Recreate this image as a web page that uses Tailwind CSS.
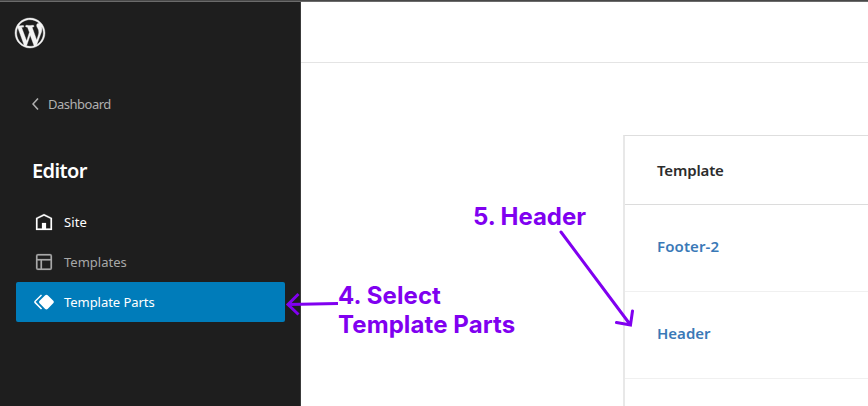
<!DOCTYPE html>
<html lang="en">
<head>
<meta charset="utf-8">
<title>Editor</title>
<script src="https://cdn.jsdelivr.net/npm/@tailwindcss/browser@4"></script>
</head>
<body class="relative h-[406px] w-[868px] overflow-hidden bg-white font-['Noto_Sans',sans-serif]">
<div class="flex h-[406px] flex-col">
  <div class="h-[2px] shrink-0 border-b border-[#6b6b6b] bg-[#484848]"></div>
  <div class="flex min-h-0 flex-1">
    <aside class="flex w-[301px] shrink-0 flex-col border-r border-[#3a3a3a] bg-[#1e1e1e]">
      <div class="pt-[13px] pl-3">
        <svg class="size-9" viewBox="-2 -2 24 24" fill="#f4f4f4" stroke="#f4f4f4" stroke-width=".25"><path d="M20 10c0-5.51-4.49-10-10-10C4.48 0 0 4.49 0 10c0 5.52 4.48 10 10 10 5.51 0 10-4.48 10-10zM7.78 15.37L4.37 6.22c.55-.02 1.17-.08 1.17-.08.5-.06.44-1.13-.06-1.11 0 0-1.45.11-2.37.11-.18 0-.37 0-.58-.01C4.12 2.69 6.87 1.11 10 1.11c2.33 0 4.45.87 6.05 2.34-.68-.11-1.65.39-1.65 1.58 0 .74.45 1.36.9 2.1.35.61.55 1.36.55 2.46 0 1.49-1.4 5-1.4 5l-3.03-8.37c.54-.02.82-.17.82-.17.5-.05.44-1.25-.06-1.22 0 0-1.44.12-2.38.12-.87 0-2.33-.12-2.33-.12-.5-.03-.56 1.2-.06 1.22l.92.08 1.26 3.41zM17.41 10c.24-.64.74-1.87.43-4.25.7 1.29 1.05 2.71 1.05 4.25 0 3.29-1.73 6.24-4.4 7.78.97-2.59 1.94-5.2 2.92-7.78zM6.1 18.09C3.12 16.65 1.11 13.53 1.11 10c0-1.3.23-2.48.72-3.59C3.25 10.3 4.67 14.2 6.1 18.09zm4.03-6.63l2.58 6.98c-.86.29-1.76.45-2.71.45-.79 0-1.57-.11-2.29-.33.81-2.38 1.62-4.74 2.42-7.1z"/></svg>
      </div>
      <a class="mt-[41px] flex h-6 items-center pl-6 text-[13px] tracking-[-0.5px] text-[#b0b0b0]">
        <svg class="size-6" viewBox="0 0 24 24" fill="currentColor"><path d="M14.6 7l-1.2-1L8 12l5.4 6 1.2-1-4.6-5z"/></svg>
        <span class="pt-[2px]">Dashboard</span>
      </a>
      <h1 class="mt-[41px] pl-8 text-[20px] leading-7 font-semibold tracking-[-0.6px] text-white">Editor</h1>
      <nav class="mt-[17px] flex flex-col pl-4 text-[13px]">
        <a class="flex h-10 w-[269px] items-center gap-2 pl-4 text-white">
          <svg class="size-6" viewBox="0 0 24 24" fill="currentColor" stroke="currentColor" stroke-width=".2"><path d="M12 4L4 7.9V20h16V7.9L12 4zm6.5 14.5H14V13h-4v5.5H5.5V8.8L12 5.7l6.5 3.1v9.7z"/></svg>
          <span class="pt-[2px] tracking-[0.1px]">Site</span>
        </a>
        <a class="flex h-10 w-[269px] items-center gap-2 pl-4 text-[#a8a8a8]">
          <svg class="size-6" viewBox="0 0 24 24" fill="currentColor" stroke="currentColor" stroke-width=".2"><path d="M18 5.5H6a.5.5 0 00-.5.5v3h13V6a.5.5 0 00-.5-.5zm.5 5H10v8h8a.5.5 0 00.5-.5v-7.5zm-10 0h-3V18a.5.5 0 00.5.5h2.5v-8zM6 4h12a2 2 0 012 2v12a2 2 0 01-2 2H6a2 2 0 01-2-2V6a2 2 0 012-2z"/></svg>
          <span class="pt-[2px]">Templates</span>
        </a>
        <a class="flex h-10 w-[269px] items-center gap-2 rounded-[2px] bg-[#007cba] pl-4 text-white">
          <svg class="size-6" viewBox="0 0 24 24" fill="currentColor"><path d="M21.3 10.8l-5.6-5.6c-.7-.7-1.8-.7-2.5 0l-5.6 5.6c-.7.7-.7 1.8 0 2.5l5.6 5.6c.3.3.8.5 1.2.5s.9-.2 1.2-.5l5.6-5.6c.8-.7.8-1.9.1-2.5zm-17.6 1L10 5.5l-1-1-6.3 6.3c-.7.7-.7 1.8 0 2.5L9 19.5l1.1-1.1-6.3-6.3c-.2 0-.2-.2-.1-.3z"/></svg>
          <span class="pt-[2px] tracking-[-0.05px]">Template Parts</span>
        </a>
      </nav>
    </aside>
    <main class="flex min-w-0 flex-1 flex-col">
      <header class="h-[61px] shrink-0 border-b border-[#e4e4e4]"></header>
      <section class="mt-[72px] ml-[322px] flex-1 overflow-hidden border-t border-l-2 border-t-[#dedede] border-l-[#e8e8e8] text-[15px] font-semibold">
        <div class="flex h-[69px] items-center border-b border-[#dcdcdc] pl-8 tracking-[-0.15px] text-[#2c2c2c]"><span>Template</span></div>
        <div class="flex h-[87px] items-center border-b border-[#f0f0f0] pb-1 pl-8 tracking-[0.1px] text-[#3a79b7]"><span>Footer-2</span></div>
        <div class="flex h-[87px] items-center border-b border-[#f0f0f0] pb-1 pl-8 text-[#3a79b7]"><span>Header</span></div>
      </section>
    </main>
  </div>
</div>
<!-- Step callouts -->
<div class="absolute top-[281px] left-[338px] font-[Inter,sans-serif] text-[24px] leading-[29px] font-bold tracking-[0.1px] whitespace-nowrap text-[#8000f0]">4. Select<br>Template Parts</div>
<div class="absolute top-[202px] left-[473px] font-[Inter,sans-serif] text-[24px] leading-[29px] font-bold tracking-[-0.05px] whitespace-nowrap text-[#8000f0]">5. Header</div>
<svg class="absolute inset-0" width="868" height="406" fill="none" stroke="#8000f0" stroke-width="3">
  <path d="M338 303.5L288 304.5M298.500 294L288 304.500L298.500 314.500"/>
  <path stroke-linecap="round" d="M561 232L630.500 325M616.500 322.500L630.500 325L632.500 311"/>
</svg>
</body>
</html>
